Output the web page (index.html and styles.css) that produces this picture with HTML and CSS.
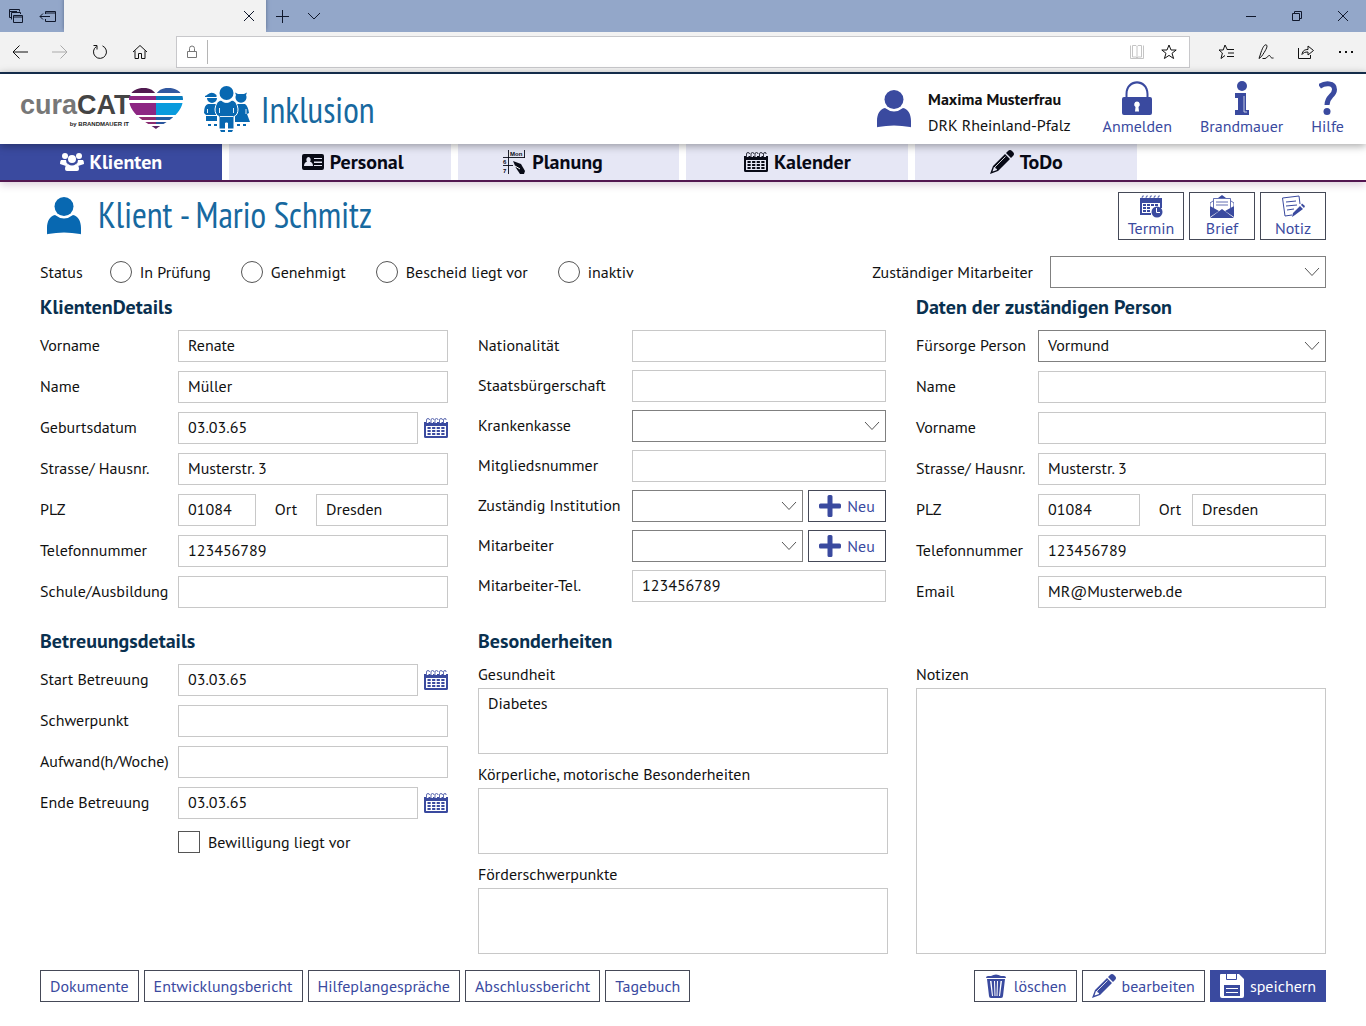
FILE: index.html
```html
<!DOCTYPE html>
<html lang="de">
<head>
<meta charset="utf-8">
<meta name="viewport" content="width=device-width, initial-scale=1">
<title>curaCAT Inklusion</title>
<link rel="stylesheet" href="styles.css">
</head>
<body>
<svg class="sprite" aria-hidden="true">
  <symbol id="user" viewBox="0 0 34 38"><circle cx="17" cy="9.500" r="9.500"/><path d="M1 37Q0 38 0 36V31C0 24 3 19 8 18Q17 25 26 18C31 19 34 24 34 31V36Q34 38 33 37Q17 34 1 37Z"/></symbol>
  <symbol id="calendar" viewBox="0 0 24 20"><path fill-rule="evenodd" d="M0 4H2V5H4.500V4H6.500V5H9V4H10.500V5H13V4H15V5H17.500V4H19V5H22V4H24V18.500Q24 20 22.500 20H1.500Q0 20 0 18.500ZM2 8V18H22V8Z"/><path fill="none" stroke="currentColor" stroke-width=".8" d="M2.500 5V2Q2.500.5 4 .5T5.500 2M7 5V2Q7 .5 8.500.5T10 2M11 5V2Q11 .5 12.500.5T14 2M15.500 5V2Q15.500.5 17 .5T18.500 2M19.500 5V2Q19.500.5 21 .5T22 2"/><path d="M3.500 9h3.200v2H3.500zm4.600 0h3.200v2H8.100zm4.600 0h3.200v2h-3.200zm4.600 0h3.200v2h-3.200zM3.500 12h3.200v2H3.500zm4.600 0h3.200v2H8.100zm4.600 0h3.200v2h-3.200zm4.600 0h3.200v2h-3.200zM3.500 15h3.200v2H3.500zm4.600 0h3.200v2H8.100zm4.600 0h3.200v2h-3.200zm4.600 0h3.200v2h-3.200z"/></symbol>
  <symbol id="pencil" viewBox="0 0 24 24"><path fill-rule="evenodd" d="M16 3L18 1Q20-1 22 1L23 2Q25 4 23 6L21 8ZM15 4L20 9L8 21L0 24L3 16ZM4 17L2.500 21.500L7 20Q7 18 5.500 18.500Q6 17 4 17Z"/><path d="M5 17L15.500 6.500" stroke="#fff" stroke-width=".8"/></symbol>
  <symbol id="plus" viewBox="0 0 22 22"><path d="M10 0h2q1.500 0 1.500 1.500v7h7q1.500 0 1.500 1.500v2q0 1.500-1.500 1.500h-7v7q0 1.500-1.500 1.500h-2q-1.500 0-1.500-1.500v-7h-7q-1.500 0-1.500-1.500v-2q0-1.500 1.500-1.500h7v-7q0-1.500 1.500-1.500Z"/></symbol>
  <symbol id="chevron" viewBox="0 0 16 10"><path fill="none" stroke="currentColor" d="M1 1L8 8.500L15 1"/></symbol>
  <symbol id="star" viewBox="0 0 16 16"><path fill="none" stroke="currentColor" d="M8 1L10 6H15.200L11 9.300L12.600 14.500L8 11.400L3.400 14.500L5 9.300L.8 6H6Z"/></symbol>
</svg>

<div class="titlebar">
  <button class="tb-icon" aria-label="Tabs"><svg width="16" height="16" viewBox="0 0 16 16"><path d="M1.500 9.500V1.500H11.500V3.500M1.500 3.500H9M1.500 9.500H3M3.500 11.500V4.500H12.500V6M5.500 7.500H14.500V14.500H5.500ZM5.500 9H14.500"/></svg></button>
  <button class="tb-icon" aria-label="Tabs ablegen"><svg width="18" height="16" viewBox="0 0 18 16"><path d="M6.500 6V3.500H16.500V13.500H6.500V11M6.500 5H16.500M1 8.500H11M4 5.500L1 8.500L4 11.500"/></svg></button>
  <div class="page-tab"><button aria-label="Tab schließen"><svg width="12" height="12" viewBox="0 0 12 12"><path d="M1 1L11 11M11 1L1 11"/></svg></button></div>
  <button class="tb-icon" aria-label="Neuer Tab"><svg width="14" height="14" viewBox="0 0 14 14"><path d="M7.500 1V14M1 7.500H14"/></svg></button>
  <button class="tb-icon" aria-label="Tabvorschau"><svg width="14" height="8" viewBox="0 0 14 8"><path d="M1 1L7 7L13 1"/></svg></button>
  <div class="window-buttons">
    <button aria-label="Minimieren"><svg width="12" height="12" viewBox="0 0 12 12"><path d="M1 6.500H11"/></svg></button>
    <button aria-label="Verkleinern"><svg width="12" height="12" viewBox="0 0 12 12"><path d="M1.500 3.500H8.500V10.500H1.500ZM3.500 3.500V1.500H10.500V8.500H8.500"/></svg></button>
    <button aria-label="Schließen"><svg width="12" height="12" viewBox="0 0 12 12"><path d="M1 1L11 11M11 1L1 11"/></svg></button>
  </div>
</div>
<div class="toolbar">
  <button aria-label="Zurück"><svg width="16" height="14" viewBox="0 0 16 14"><path d="M1 7H16M7.500.5L1 7L7.500 13.500"/></svg></button>
  <button class="dim" aria-label="Vor"><svg width="16" height="14" viewBox="0 0 16 14"><path d="M0 7H15M8.500.5L15 7L8.500 13.500"/></svg></button>
  <button aria-label="Neu laden"><svg width="16" height="16" viewBox="0 0 16 16"><path d="M10.500 1.900A6.500 6.500 0 1 1 4.500 2.400M1.500 1.500H5V5.500"/></svg></button>
  <button aria-label="Startseite"><svg width="16" height="16" viewBox="0 0 16 16"><path d="M1 8L8 1.500L15 8M3 6.500V14.500H6.500V9.500H9.500V14.500H13V6.500"/></svg></button>
  <div class="address">
    <svg class="lock" width="12" height="14" viewBox="0 0 12 14"><path d="M1.500 6.500H10.500V12.500H1.500ZM3.500 6V3.500A2.500 2.500 0 0 1 8.500 3.500V6"/></svg>
    <input type="text" aria-label="Adresse">
    <button class="faint" aria-label="Leseansicht"><svg width="16" height="14" viewBox="0 0 16 14"><path d="M8 1.500V12.500M1.500.5V13.500H14.500V.5M3.500.5H7L8 1.500L9 .5H12.500V12H9L8 13L7 12H3.500Z"/></svg></button>
    <button aria-label="Favorit"><svg width="16" height="16"><use href="#star"/></svg></button>
  </div>
  <div class="tools">
    <button aria-label="Favoriten"><svg width="17" height="16" viewBox="0 0 17 16"><path d="M9.500 6L7 1L5.200 6H1L4.400 9L3 14.500L7 11.500M9 5.500H16M10 9H16M9 12.500H16"/></svg></button>
    <button aria-label="Notizen machen"><svg width="16" height="16" viewBox="0 0 16 16"><path d="M1 14.500L2.500 10C4 5 6 .5 8 .8C10.500 1.500 8 6 3.500 12.500L1 14.500M4.500 14.500H7C9 14.500 10 11 11.500 11.500C13 12 12 14.500 15.500 14"/></svg></button>
    <button aria-label="Teilen"><svg width="18" height="16" viewBox="0 0 18 16"><path d="M1.500 4V14.500H13.500V11M5 10.500C5.500 6.500 8 5.500 11 5.500V2L16.500 6.500L11 11V8C8 8 6.500 8.500 5 10.500Z"/></svg></button>
    <button aria-label="Mehr"><svg width="16" height="4" viewBox="0 0 16 4"><path d="M1 2H3M7 2H9M13 2H15" stroke-width="2"/></svg></button>
  </div>
</div>

<header class="app-header">
  <div class="brand">
    <div class="wordmark"><div class="name">cura<b>CAT</b></div><div class="by">by BRANDMAUER IT</div></div>
    <svg width="54" height="42" viewBox="0 0 54 42" aria-hidden="true">
      <clipPath id="heart"><path d="M27 41C23 37 0 28 0 11C0 0 20-5 27 6C34-5 54 0 54 11C54 28 31 37 27 41Z"/></clipPath>
      <g clip-path="url(#heart)">
        <path fill="#511a50" d="M0 0H27V5H0Z"/><path fill="#3158a0" d="M27 0H54V5H27Z"/>
        <path fill="#8d2683" d="M0 8H27V12H0ZM0 15H27V27H0Z"/><path fill="#087abd" d="M27 8H54V12H27Z"/><path fill="#099bdd" d="M27 15H54V27H27Z"/>
        <path fill="#8e2b70" d="M0 29H27V32H0Z"/><path fill="#245da2" d="M27 29H54V32H27Z"/><path fill="#8a2c71" d="M0 34H27V36H0Z"/><path fill="#29559d" d="M27 34H54V36H27Z"/><path fill="#5d2465" d="M0 38H54V42H0Z"/>
      </g>
    </svg>
  </div>
  <svg class="family" width="46" height="47" viewBox="0 0 46 47" aria-hidden="true">
    <path d="M1 10Q3 9 3.500 8.500Q8 5 12.500 9V11H1ZM3 12H13A5 5 0 0 1 3 12ZM4 18H12L15 20V29H2L0 27Q0 19 4 18ZM2 30H13V35H2Z"/>
    <path d="M32 9L31 6.500L34 8H40L43 6.500L42 9A5.500 5.500 0 1 1 32 9M33 18H41Q44 20 45 27L43 28L46 36H31V20Z"/>
    <path stroke="#fff" d="M17 14Q22.500 19 28 14Q33 15 34 23Q34 29 30 30.500V43H23.500V37H21.500V43H15V30.500Q11 29 11 23Q12 15 17 14Z"/><circle cx="22.500" cy="7" r="7"/><path d="M16 44H21V46H17ZM24 44H29L28 46H24ZM4 38H7V40H4ZM10 38H13V40H10ZM33 38H36V40H33ZM39 38H42V40H39Z"/>
    <path fill="none" stroke="#fff" stroke-width=".9" d="M15.500 22V27M29.500 22V27M16 30.500H29.500M3.500 23V27M42 23V28"/>
  </svg>
  <div class="product">Inklusion</div>
  <div class="account">
    <svg width="34" height="38"><use href="#user"/></svg>
    <div><strong>Maxima Musterfrau</strong><span>DRK Rheinland-Pfalz</span></div>
  </div>
  <nav class="links">
    <a href="#"><svg width="30" height="35" viewBox="0 0 30 35"><path d="M3.500 17V13C3.500-4 26.500-4 26.500 13V17H24.500V13C24.500-1 5.500-1 5.500 13V17Z"/><path fill-rule="evenodd" d="M2 16H28Q30 16 30 18V32Q30 34 28 34H2Q0 34 0 32V18Q0 16 2 16ZM15 20.500A3 3 0 0 0 13.500 26L13 30.500H17L16.500 26A3 3 0 0 0 15 20.500Z"/></svg>Anmelden</a>
    <a href="#"><svg width="16" height="35" viewBox="0 0 16 35"><circle cx="8" cy="5" r="5"/><path d="M1 12H12V29H15V34H1V29H4V17H1Z"/><path d="M10 15V31H13" fill="none" stroke="#fff" stroke-width=".7"/></svg>Brandmauer</a>
    <a href="#"><svg width="18" height="35" viewBox="0 0 18 35"><path fill="none" stroke="currentColor" stroke-width="5" d="M.5 5.500C6 1.500 15.500 1.500 15.500 8.500C15.500 15 8 15 8 24"/><circle cx="8" cy="30.500" r="3.500"/></svg>Hilfe</a>
  </nav>
</header>

<nav class="tabs">
  <a class="active" href="#"><svg width="24" height="18" viewBox="0 0 24 18"><circle cx="5" cy="3" r="3"/><circle cx="19" cy="3" r="3"/><path d="M1 7H6Q6 10 8 11L6 13L0 11Q0 8 1 7ZM18 7H23Q24 8 24 11L18 13L16 11Q18 10 18 7Z"/><circle cx="12" cy="6" r="4"/><path d="M8 11Q12 14 16 11Q19 12 19 16Q19 18 17 18H7Q5 18 5 16Q5 12 8 11Z"/></svg>Klienten</a>
  <a class="staff" href="#"><svg width="22" height="16" viewBox="0 0 22 16"><path fill-rule="evenodd" d="M2 0H20Q22 0 22 2V14Q22 16 20 16H2Q0 16 0 14V2Q0 0 2 0ZM12 4V5H20V4ZM12 7.500V9H20V7.500ZM12 11V12H20V11ZM6.500 3A2.200 2.600 0 0 0 5 7.500Q2 8.500 2 12H11Q11 8.500 8 7.500A2.200 2.600 0 0 0 6.500 3Z"/></svg>Personal</a>
  <a class="planning" href="#"><svg width="24" height="24" viewBox="0 0 24 24"><path fill="none" stroke="currentColor" stroke-width=".9" d="M6.500 0V24M22.500 0V8M1 7.500H23M1 15.500H11"/><path d="M11 11L19 14L23 21L22 24H18L14 18Z"/><path d="M13 16L18 19" stroke="#fff"/><text x="8" y="6" class="micro">Mon</text><text x="1" y="14" class="micro">6</text><text x="1" y="23" class="micro">7</text></svg>Planung</a>
  <a href="#"><svg width="24" height="20"><use href="#calendar"/></svg>Kalender</a>
  <a href="#"><svg width="24" height="24"><use href="#pencil"/></svg>ToDo</a>
</nav>

<main>
  <div class="title-row">
    <svg width="34" height="38"><use href="#user"/></svg>
    <h1>Klient - Mario Schmitz</h1>
    <div class="quick">
      <button><svg width="24" height="23" viewBox="0 0 24 23"><path fill-rule="evenodd" d="M1 3H23V13H21V8H3V18H12V20H1ZM4 9h3v2H4zm4 0h3v2H8zm4 0h3v2h-3zm4 0h3v2h-3zM4 12h3v2H4zm4 0h3v2H8zM4 15h3v2H4zm4 0h3v2H8z"/><path fill="none" stroke="currentColor" stroke-width=".8" d="M3 3Q3 0 5 1M7 3Q7 0 9 1M11 3Q11 0 13 1M15 3Q15 0 17 1M19 3Q19 0 21 1"/><circle cx="18" cy="17" r="5.500"/><path stroke="#fff" fill="none" d="M17.500 13V17.500H21"/></svg>Termin</button>
      <button><svg width="24" height="23" viewBox="0 0 24 23"><path d="M8 3L12 0L16 3ZM0 11L9 16L0 22ZM24 11L15 16L24 22ZM0 23L12 14L24 23Z"/><path d="M0 11V8L3 6M24 11V8L21 6M3.500 13V3.500H20.500V13M6 7H18M6 10H18" fill="none" stroke="currentColor" stroke-width=".8"/></svg>Brief</button>
      <button><svg width="24" height="23" viewBox="0 0 24 23"><path fill="none" stroke="currentColor" d="M11 20L4 21L1.500 3L18 1L19 9M5 7L15 6M5 11L16 10M6 15L13 14"/><path d="M20 10L21 8.500L24 11L23 13ZM19 11L22 14L14 20L11 22L12 18Z"/></svg>Notiz</button>
    </div>
  </div>

  <div class="status-row">
    <fieldset>
      <legend>Status</legend>
      <label><input type="radio" name="status">In Prüfung</label>
      <label><input type="radio" name="status">Genehmigt</label>
      <label><input type="radio" name="status">Bescheid liegt vor</label>
      <label><input type="radio" name="status">inaktiv</label>
    </fieldset>
    <label for="zm">Zuständiger Mitarbeiter</label>
    <div class="select"><select id="zm"><option></option></select><svg width="16" height="10"><use href="#chevron"/></svg></div>
  </div>

  <div class="columns details">
    <section class="client">
      <h2>KlientenDetails</h2>
      <div class="row"><label for="vn">Vorname</label><input id="vn" type="text" value="Renate"></div>
      <div class="row"><label for="nn">Name</label><input id="nn" type="text" value="Müller"></div>
      <div class="row"><label for="gd">Geburtsdatum</label><input id="gd" type="text" value="03.03.65"><button class="cal" aria-label="Kalender öffnen"><svg width="24" height="20"><use href="#calendar"/></svg></button></div>
      <div class="row"><label for="st">Strasse/ Hausnr.</label><input id="st" type="text" value="Musterstr. 3"></div>
      <div class="row"><label for="plz">PLZ</label><input class="plz" id="plz" type="text" value="01084"><label class="ort" for="ort">Ort</label><input id="ort" type="text" value="Dresden"></div>
      <div class="row"><label for="tel">Telefonnummer</label><input id="tel" type="text" value="123456789"></div>
      <div class="row"><label for="sa">Schule/Ausbildung</label><input id="sa" type="text"></div>
    </section>
    <section class="insurance">
      <div class="row"><label for="na">Nationalität</label><input id="na" type="text"></div>
      <div class="row"><label for="sb">Staatsbürgerschaft</label><input id="sb" type="text"></div>
      <div class="row"><label for="kk">Krankenkasse</label><div class="select"><select id="kk"><option></option></select><svg width="16" height="10"><use href="#chevron"/></svg></div></div>
      <div class="row"><label for="mn">Mitgliedsnummer</label><input id="mn" type="text"></div>
      <div class="row"><label for="zi">Zuständig Institution</label><div class="select"><select id="zi"><option></option></select><svg width="16" height="10"><use href="#chevron"/></svg></div><button class="btn new"><svg width="22" height="22"><use href="#plus"/></svg>Neu</button></div>
      <div class="row"><label for="ma">Mitarbeiter</label><div class="select"><select id="ma"><option></option></select><svg width="16" height="10"><use href="#chevron"/></svg></div><button class="btn new"><svg width="22" height="22"><use href="#plus"/></svg>Neu</button></div>
      <div class="row"><label for="mt">Mitarbeiter-Tel.</label><input id="mt" type="text" value="123456789"></div>
    </section>
    <section class="guardian">
      <h2>Daten der zuständigen Person</h2>
      <div class="row"><label for="fp">Fürsorge Person</label><div class="select"><select id="fp"><option>Vormund</option></select><svg width="16" height="10"><use href="#chevron"/></svg></div></div>
      <div class="row"><label for="gn">Name</label><input id="gn" type="text"></div>
      <div class="row"><label for="gv">Vorname</label><input id="gv" type="text"></div>
      <div class="row"><label for="gs">Strasse/ Hausnr.</label><input id="gs" type="text" value="Musterstr. 3"></div>
      <div class="row"><label for="gp">PLZ</label><input class="plz" id="gp" type="text" value="01084"><label class="ort" for="go">Ort</label><input id="go" type="text" value="Dresden"></div>
      <div class="row"><label for="gt">Telefonnummer</label><input id="gt" type="text" value="123456789"></div>
      <div class="row"><label for="ge">Email</label><input id="ge" type="text" value="MR@Musterweb.de"></div>
    </section>
  </div>

  <div class="columns care">
    <section class="client">
      <h2>Betreuungsdetails</h2>
      <div class="row"><label for="sbt">Start Betreuung</label><input id="sbt" type="text" value="03.03.65"><button class="cal" aria-label="Kalender öffnen"><svg width="24" height="20"><use href="#calendar"/></svg></button></div>
      <div class="row"><label for="sp">Schwerpunkt</label><input id="sp" type="text"></div>
      <div class="row"><label for="aw">Aufwand(h/Woche)</label><input id="aw" type="text"></div>
      <div class="row"><label for="eb">Ende Betreuung</label><input id="eb" type="text" value="03.03.65"><button class="cal" aria-label="Kalender öffnen"><svg width="24" height="20"><use href="#calendar"/></svg></button></div>
      <label class="check"><input type="checkbox">Bewilligung liegt vor</label>
    </section>
    <section class="notes">
      <h2>Besonderheiten</h2>
      <label for="ges">Gesundheit</label><textarea id="ges">Diabetes</textarea>
      <label for="kmb">Körperliche, motorische Besonderheiten</label><textarea id="kmb"></textarea>
      <label for="fs">Förderschwerpunkte</label><textarea id="fs"></textarea>
    </section>
    <section class="notes remarks">
      <label for="no">Notizen</label><textarea id="no"></textarea>
    </section>
  </div>

  <footer>
    <button class="btn">Dokumente</button>
    <button class="btn">Entwicklungsbericht</button>
    <button class="btn">Hilfeplangespräche</button>
    <button class="btn">Abschlussbericht</button>
    <button class="btn">Tagebuch</button>
    <div class="actions">
      <button class="btn"><svg width="24" height="24" viewBox="0 0 24 24"><path fill-rule="evenodd" d="M7 2Q12-1 17 2H20Q22 2 22 4H2Q2 2 4 2ZM3 5H21L19 22Q19 24 17 24H7Q5 24 5 22ZM6 7L8 22H9L7.500 7ZM10 7L10.500 22H11.500L11 7ZM13 7L12.500 22H13.500L14 7ZM16.500 7L15 22H16L18 7Z"/></svg>löschen</button>
      <button class="btn"><svg width="24" height="24"><use href="#pencil"/></svg>bearbeiten</button>
      <button class="btn primary"><svg width="24" height="24" viewBox="0 0 24 24"><path fill-rule="evenodd" d="M1 0H19L24 5V22Q24 24 22 24H2Q0 24 0 22V1Q0 0 1 0ZM6 0V5Q6 6 7 6H16Q17 6 17 5V0H16V5H7V0ZM4 11V22H20V11Z"/><path d="M6 14h12v1H6ZM6 18h12v1H6Z"/></svg>speichern</button>
    </div>
  </footer>
</main>
</body>
</html>
```
FILE: styles.css
```css
:root {
  --indigo: #3a4a9f;
  --blue: #0868b1;
  --navy: #09304f;
  --line: #c8c8c8;
  --dark-line: #454957;
}

* { box-sizing: border-box; }

body {
  margin: 0;
  background: #fff;
  color: #111;
  font: 16px/20px "PT Sans", "Noto Sans", sans-serif;
}

button, input, select, textarea { font: inherit; color: inherit; }
button { padding: 0; border: 0; background: none; cursor: pointer; }
svg { display: block; flex: none; fill: currentColor; }
.sprite { display: none; }

/* Browser frame */
.titlebar, .toolbar { display: flex; align-items: center; }
.titlebar { height: 32px; background: #93a7c9; color: #10182c; }
.titlebar svg, .toolbar svg { fill: none; stroke: currentColor; stroke-width: 1; }
.tb-icon { display: grid; place-items: center; width: 32px; height: 32px; }
.page-tab {
  display: flex;
  align-items: center;
  justify-content: flex-end;
  width: 202px;
  height: 32px;
  padding-right: 11px;
  background: #f2f2f2;
  box-shadow: 0 -2px 4px #5a6a8a;
}
.window-buttons { display: flex; gap: 34px; margin-left: auto; padding-right: 17px; }
.toolbar { position: relative; gap: 24px; height: 40px; padding-left: 12px; background: #f2f2f2; color: #111; }
.toolbar .dim { color: #aaa; }
.toolbar .faint { color: #c4c4c4; }
.address {
  display: flex;
  flex: 1;
  align-items: center;
  gap: 16px;
  height: 32px;
  margin-left: 4px;
  padding: 0 12px 0 9px;
  border: 1px solid #c8c8cb;
  background: #fff;
}
.address .lock { color: #777; }
.address input[type="text"] {
  flex: 1;
  min-width: 0;
  height: 24px;
  margin-left: -7px;
  border: 0;
  border-left: 1px solid #b5b5b5;
  outline: 0;
}
.tools { display: flex; align-items: center; gap: 23px; padding: 0 12px 0 4px; }

/* Application header */
.app-header {
  position: relative;
  z-index: 1;
  display: flex;
  align-items: center;
  height: 72px;
  padding: 0 22px 0 20px;
  border-top: 2px solid #142c4a;
  background: #fff;
  box-shadow: 0 2px 8px rgba(0, 0, 0, .35);
}
.brand { display: flex; align-items: center; }
.wordmark { width: 109px; font-family: "Liberation Sans", Arial, sans-serif; }
.wordmark .name { color: #777; font-size: 27px; font-weight: 700; line-height: 30px; }
.wordmark b { color: #444; }
.wordmark .by { color: #222; font-size: 6px; font-weight: 700; line-height: 8px; text-align: right; }
.family { margin-left: 21px; color: var(--blue); }
.product, h1 { color: #17699f; font: 36px/40px "PT Sans Narrow", "Liberation Sans Narrow", "Noto Sans", sans-serif; }
.product { margin-left: 11px; padding-top: 2px; }
.account { display: flex; align-items: center; gap: 17px; margin-left: auto; color: var(--indigo); }
.account strong, .account span { display: block; color: #111; line-height: 26px; }
.account div { padding-top: 6px; }
.links { display: flex; gap: 28px; margin-left: 32px; padding-bottom: 2px; }
.links a {
  display: flex;
  flex-direction: column;
  align-items: center;
  color: var(--indigo);
  text-decoration: none;
}

/* Main navigation */
.tabs {
  display: grid;
  grid-template-columns: repeat(6, 1fr);
  gap: 7px;
  height: 38px;
  border-bottom: 2px solid #521650;
  box-shadow: 0 3px 8px rgba(82, 22, 80, .2);
}
.tabs a {
  display: flex;
  align-items: center;
  justify-content: center;
  gap: 6px;
  background: #e6e7f5;
  color: #080a16;
  font-size: 20px;
  font-weight: 700;
  text-decoration: none;
}
.tabs .active { background: var(--indigo); color: #fff; }
.tabs .staff { padding-left: 26px; }
.tabs .planning { padding-right: 32px; }
.micro { font: 700 6px "Liberation Sans", sans-serif; }

/* Page heading */
main { padding: 10px 40px 24px; }
.title-row { display: flex; align-items: center; padding-left: 7px; color: var(--blue); }
h1 { margin: 0 0 0 17px; padding-bottom: 2px; }
.quick { display: flex; gap: 5px; margin-left: auto; }
.quick button {
  display: flex;
  flex-direction: column;
  align-items: center;
  width: 66px;
  height: 48px;
  padding-top: 2px;
  border: 1px solid var(--dark-line);
  color: var(--indigo);
  line-height: 20px;
}

/* Status */
.status-row { display: flex; align-items: center; margin-top: 16px; }
fieldset { display: flex; align-items: center; gap: 30px; flex: 1; margin: 0; padding: 0; border: 0; }
legend { float: left; margin-right: -3px; padding: 0; }
fieldset label { display: flex; align-items: center; gap: 8px; }
input[type="radio"], input[type="checkbox"] {
  appearance: none;
  flex: none;
  width: 22px;
  height: 22px;
  margin: 0;
  border: 1px solid #555;
  background: #fff;
}
input[type="radio"] { border-radius: 50%; }
.status-row .select { width: 276px; margin-left: 17px; }

/* Form grid */
.columns { display: grid; grid-template-columns: repeat(3, minmax(0, 1fr)); gap: 28px; }
h2 { margin: 0; color: var(--navy); font-size: 20px; font-weight: 700; line-height: 24px; }
.details { margin-top: 7px; }
.details section, .care .client { display: flex; flex-direction: column; gap: 9px; }
.details h2 { margin-bottom: 2px; }
.details .insurance { gap: 8px; padding-top: 35px; }
.client { padding-right: 2px; }
.row { display: flex; align-items: center; height: 32px; white-space: nowrap; }
.row > label { padding-bottom: 2px; }
.row > label:first-child { flex: none; width: 138px; }
.insurance .row { padding-right: 2px; }
.insurance .row > label:first-child { width: 154px; }
.guardian .row > label:first-child { width: 122px; }
input[type="text"], select, textarea { border: 1px solid var(--line); border-radius: 0; background: #fff; }
.row input { flex: 1; min-width: 0; height: 32px; padding: 0 9px 2px; }
.row .plz { flex: 0 0 78px; }
.guardian .row .plz { flex-basis: 102px; }
.ort { width: 60px; text-align: center; }
.guardian .ort { width: 52px; padding-left: 8px; }
.select { display: grid; flex: 1; align-items: center; min-width: 0; }
.status-row .select { flex: none; }
.select > * { grid-area: 1 / 1; }
.select svg { justify-self: end; margin-right: 6px; color: #555; pointer-events: none; }
select { appearance: none; width: 100%; height: 32px; padding: 0 9px 2px; }
.select select { border-color: #808080; }
.cal { margin-left: 6px; color: var(--indigo); }

/* Buttons */
.btn {
  display: flex;
  align-items: center;
  justify-content: center;
  gap: 6px;
  height: 32px;
  padding: 0 9px;
  border: 1px solid var(--dark-line);
  color: var(--indigo);
  line-height: 18px;
  white-space: nowrap;
}
.new { width: 78px; margin-left: 5px; }
.primary { border-color: var(--indigo); background: var(--indigo); color: #fff; }

/* Care details and notes */
.care { margin-top: 21px; }
.care h2 { margin-bottom: 2px; }
.check { display: flex; align-items: center; gap: 8px; margin: 3px 0 0 138px; }
.notes { display: flex; flex-direction: column; }
.care .notes h2 { margin-bottom: 11px; }
.notes label { padding-bottom: 4px; line-height: 20px; }
.notes textarea {
  display: block;
  width: 100%;
  height: 66px;
  margin-bottom: 10px;
  padding: 4px 9px;
  resize: none;
}
.notes textarea:last-child { margin-bottom: 0; }
.remarks { padding-top: 35px; }
.remarks textarea { flex: 1; }

footer { display: flex; gap: 5px; margin-top: 16px; }
.actions { display: flex; gap: 5px; margin-left: auto; }
```
